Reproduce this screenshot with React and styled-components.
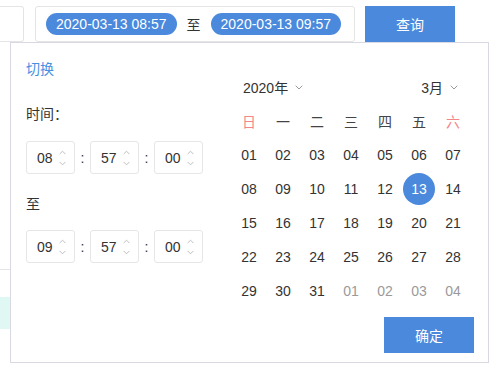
import React from 'react';
import styled, { createGlobalStyle } from 'styled-components';

const GlobalStyle = createGlobalStyle`
	html, body {
		margin: 0;
		padding: 0;
		background: #fff;
	}
	body {
		font-family: 'Liberation Sans', 'Noto Sans CJK SC', sans-serif;
		font-size: 14px;
		color: #333;
	}
`;

const blue = '#4a89dc';

const Page = styled.div`
	position: relative;
	width: 494px;
	height: 369px;
	overflow: hidden;
`;

const TopBar = styled.div`
	display: flex;
	align-items: center;
	padding-top: 6px;
	height: 36px;
`;

const StubBox = styled.div`
	width: 24px;
	height: 36px;
	box-sizing: border-box;
	border: 1px solid #e4e4e4;
	border-left: none;
	border-radius: 0 3px 3px 0;
	margin-right: 11px;
`;

const RangeBox = styled.div`
	display: flex;
	align-items: center;
	gap: 10px;
	width: 320px;
	height: 36px;
	box-sizing: border-box;
	padding: 0 10px;
	border: 1px solid #e4e4e4;
	border-radius: 3px;
	margin-right: 10px;
`;

const Pill = styled.span`
	display: inline-flex;
	align-items: center;
	height: 22px;
	padding: 0 10px;
	border-radius: 11px;
	background: ${blue};
	color: #fff;
	font-size: 14px;
	white-space: nowrap;
`;

const RangeSep = styled.span`
	color: #333;
	font-size: 14px;
`;

const Button = styled.button`
	width: 90px;
	height: 36px;
	border: none;
	background: ${blue};
	color: #fff;
	font-family: inherit;
	font-size: 14px;
	padding: 0;
	cursor: pointer;
`;

const TableArea = styled.div`
	width: 470px;
`;

const TableRow = styled.div`
	height: ${({ $h }) => $h}px;
	background: ${({ $tint }) => ($tint ? '#dff8f4' : 'transparent')};
	border-bottom: ${({ $line }) => ($line ? '1px solid #e4e4e4' : 'none')};
`;

const Popup = styled.div`
	position: absolute;
	top: 42px;
	left: 10px;
	width: 479px;
	height: 321px;
	box-sizing: border-box;
	border: 1px solid #d9d9e3;
	background: #fff;
	display: flex;
	padding: 16px 14px 9px 15px;
`;

const TimeColumn = styled.div`
	width: 206px;
	display: flex;
	flex-direction: column;
	align-items: flex-start;
`;

const SwitchLink = styled.a`
	color: #4a90e2;
	font-size: 14px;
	line-height: 20px;
	cursor: pointer;
`;

const Label = styled.div`
	font-size: 14px;
	line-height: 20px;
	color: #333;
	margin-top: ${({ $top }) => $top}px;
	margin-bottom: ${({ $bottom }) => $bottom}px;
`;

const TimeRow = styled.div`
	display: flex;
	align-items: center;
`;

const Spinner = styled.div`
	display: flex;
	align-items: center;
	width: 49px;
	height: 33px;
	box-sizing: border-box;
	padding-left: 10px;
	border: 1px solid #e6e6e6;
	border-radius: 3px;
`;

const SpinValue = styled.span`
	width: 16px;
	font-size: 14px;
	color: #333;
`;

const Arrows = styled.span`
	display: flex;
	flex-direction: column;
	gap: 6px;
	margin-left: 6px;
`;

const Colon = styled.span`
	width: 15px;
	text-align: center;
	color: #333;
`;

const CalendarColumn = styled.div`
	width: 242px;
	padding-top: 11px;
	display: flex;
	flex-direction: column;
`;

const CalHeader = styled.div`
	display: flex;
	align-items: center;
	justify-content: space-between;
	height: 34px;
	padding: 0 16px 0 11px;
`;

const Select = styled.span`
	display: inline-flex;
	align-items: center;
	gap: 7px;
	font-size: 14px;
	color: #333;
`;

const Grid = styled.div`
	display: grid;
	grid-template-columns: repeat(7, 34px);
	grid-auto-rows: 34px;
	width: 238px;
`;

const WeekDay = styled.div`
	display: flex;
	align-items: center;
	justify-content: center;
	font-size: 14px;
	color: ${({ $weekend }) => ($weekend ? '#f3868a' : '#444')};
`;

const Day = styled.div`
	display: flex;
	align-items: center;
	justify-content: center;
	font-size: 14px;
	color: ${({ $muted }) => ($muted ? '#9a9a9a' : '#333')};
`;

const DayCircle = styled.span`
	display: flex;
	align-items: center;
	justify-content: center;
	width: 32px;
	height: 32px;
	border-radius: 50%;
	background: ${({ $active }) => ($active ? blue : 'transparent')};
	color: ${({ $active }) => ($active ? '#fff' : 'inherit')};
`;

const Footer = styled.div`
	display: flex;
	justify-content: flex-end;
	margin-top: 9px;
`;

function Chevron({ up, color = '#aaa', w = 8, h = 5 }) {
	return (
		<svg width={w} height={h} viewBox='0 0 8 5' fill='none'>
			<path
				d={up ? 'M0.7 4.3L4 1L7.3 4.3' : 'M0.7 0.7L4 4L7.3 0.7'}
				stroke={color}
				strokeWidth='1'
			/>
		</svg>
	);
}

function TimeSpinner({ value }) {
	return (
		<Spinner>
			<SpinValue>{value}</SpinValue>
			<Arrows>
				<Chevron up w={7} h={5} color='#b5b5b5' />
				<Chevron w={7} h={5} color='#b5b5b5' />
			</Arrows>
		</Spinner>
	);
}

function TimePicker({ h, m, s }) {
	return (
		<TimeRow>
			<TimeSpinner value={h} />
			<Colon>:</Colon>
			<TimeSpinner value={m} />
			<Colon>:</Colon>
			<TimeSpinner value={s} />
		</TimeRow>
	);
}

const weekDays = ['日', '一', '二', '三', '四', '五', '六'];

const days = [];
for (let d = 1; d <= 31; d++) days.push({ n: d, muted: false });
for (let d = 1; d <= 4; d++) days.push({ n: d, muted: true });

const pad = (n) => String(n).padStart(2, '0');

export default function App() {
	return (
		<Page>
			<GlobalStyle />
			<TopBar>
				<StubBox />
				<RangeBox>
					<Pill>2020-03-13 08:57</Pill>
					<RangeSep>至</RangeSep>
					<Pill>2020-03-13 09:57</Pill>
				</RangeBox>
				<Button>查询</Button>
			</TopBar>
			<TableArea>
				<TableRow $h={227} $line />
				<TableRow $h={27} />
				<TableRow $h={32} $tint />
			</TableArea>
			<Popup>
				<TimeColumn>
					<SwitchLink>切换</SwitchLink>
					<Label $top={25} $bottom={17}>
						时间：
					</Label>
					<TimePicker h='08' m='57' s='00' />
					<Label $top={20} $bottom={16}>
						至
					</Label>
					<TimePicker h='09' m='57' s='00' />
				</TimeColumn>
				<CalendarColumn>
					<CalHeader>
						<Select>
							2020年 <Chevron color='#999' />
						</Select>
						<Select>
							3月 <Chevron color='#999' />
						</Select>
					</CalHeader>
					<Grid>
						{weekDays.map((w, i) => (
							<WeekDay key={w} $weekend={i === 0 || i === 6}>
								{w}
							</WeekDay>
						))}
						{days.map((d, i) => (
							<Day key={i} $muted={d.muted}>
								<DayCircle $active={!d.muted && d.n === 13}>
									{pad(d.n)}
								</DayCircle>
							</Day>
						))}
					</Grid>
					<Footer>
						<Button>确定</Button>
					</Footer>
				</CalendarColumn>
			</Popup>
		</Page>
	);
}
